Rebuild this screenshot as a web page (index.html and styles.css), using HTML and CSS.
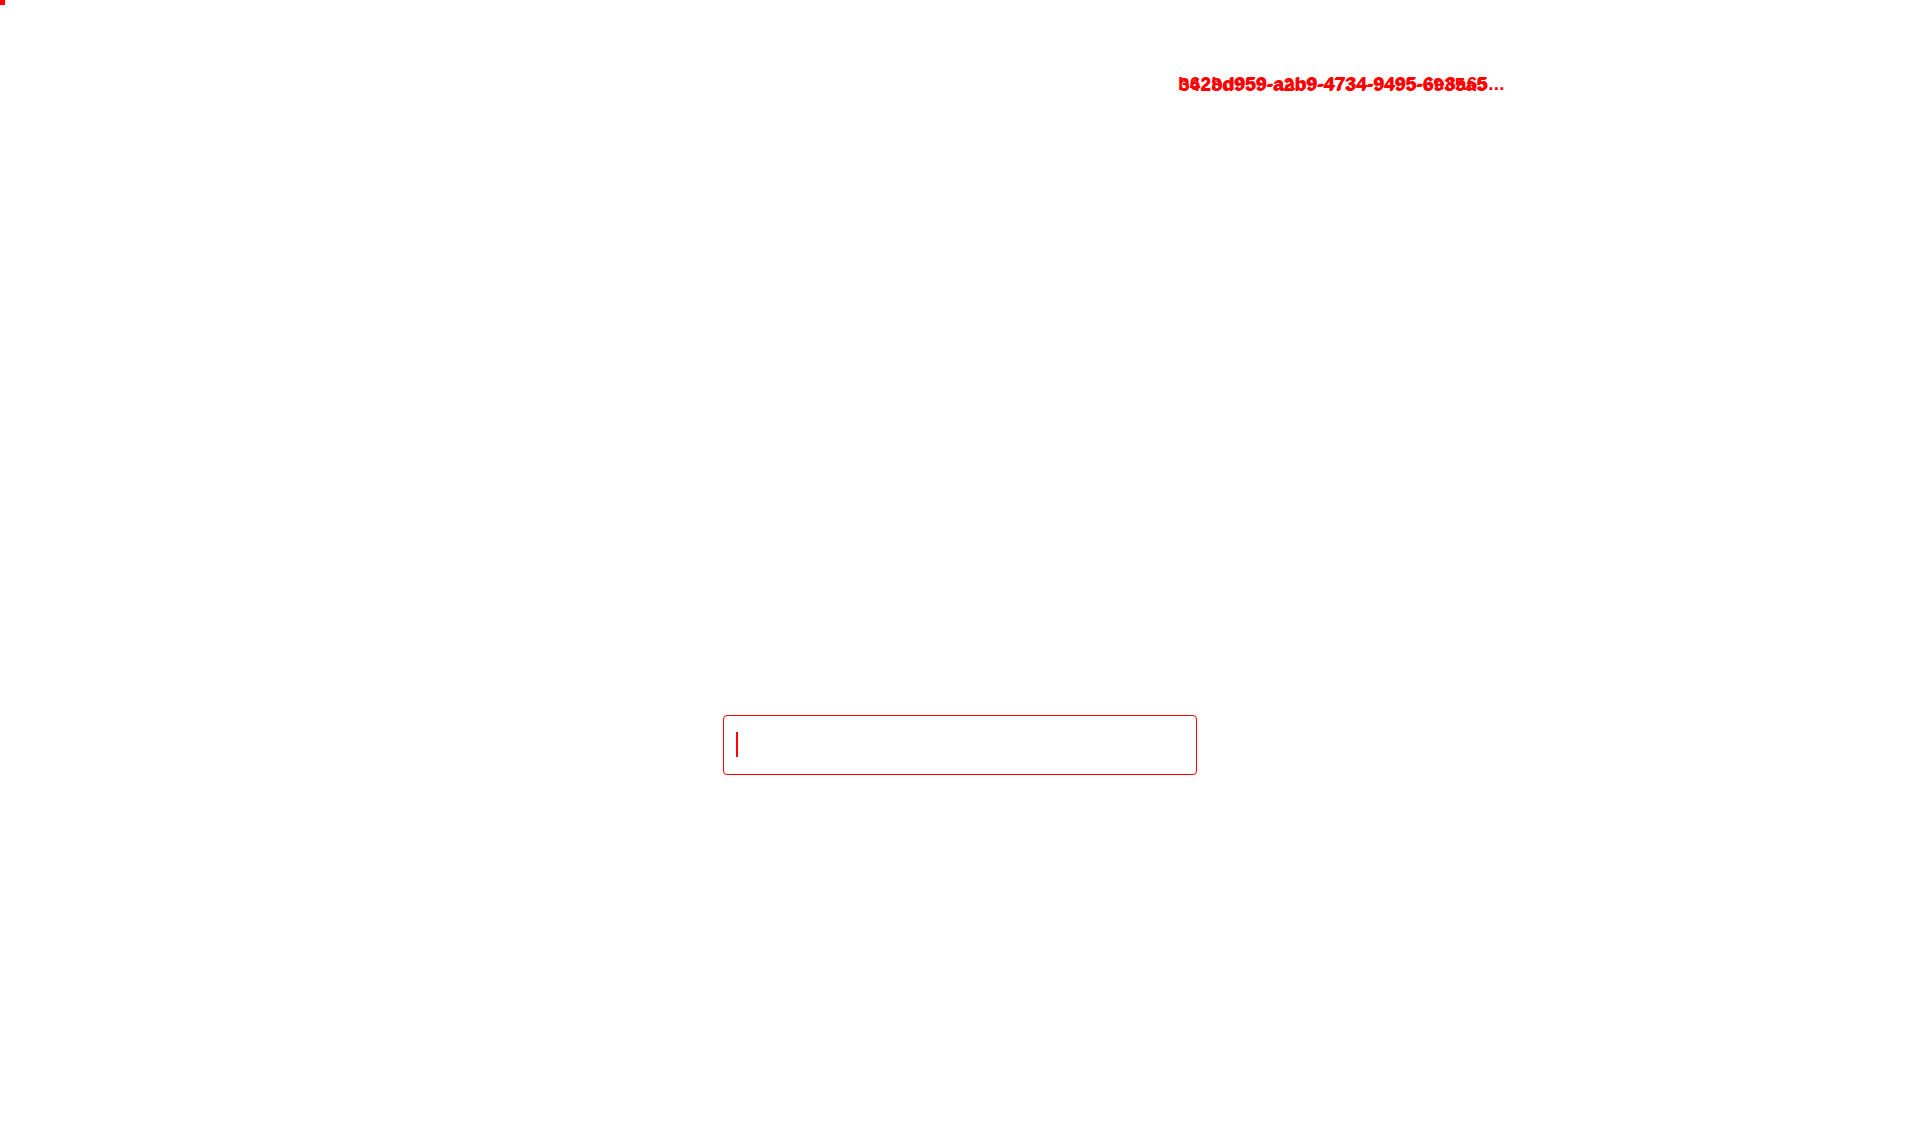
FILE: index.html
```html
<!DOCTYPE html>
<html lang="en">
<head>
<meta charset="utf-8">
<title>Session</title>
<link rel="stylesheet" href="styles.css">
</head>
<body>
<div class="page">
  <div class="marker"></div>
  <div class="title-row">
    <div class="title-stack">
      <span class="title">b62bd959-aab9-4734-9495-6e8a65...</span>
      <span class="title title-alt">3428d959-a2b9-4734-9495-6935a5</span>
    </div>
  </div>
  <div class="input-row">
    <div class="input-box"><span class="caret"></span></div>
  </div>
</div>
</body>
</html>
```

FILE: styles.css
```css
html, body {
  margin: 0;
  padding: 0;
  background: #ffffff;
}
body {
  font-family: "Liberation Sans", Arial, sans-serif;
  color: #ff0000;
  width: 1920px;
  height: 1128px;
  overflow: hidden;
}
.page {
  display: flex;
  flex-direction: column;
}
.marker {
  width: 5px;
  height: 5px;
  background: #ff0000;
}
.title-row {
  margin-top: 68px;
  padding-left: 1178px;
  display: flex;
}
.title-stack {
  display: grid;
}
.title {
  grid-area: 1 / 1;
  font-size: 19px;
  font-weight: bold;
  line-height: 22px;
  letter-spacing: 0.2px;
  color: #ff0000;
  white-space: nowrap;
}
.title-alt {
  padding-top: 1px;
  padding-left: 1px;
}
.input-row {
  margin-top: 619px;
  display: flex;
  justify-content: center;
}
.input-box {
  box-sizing: border-box;
  width: 474px;
  height: 60px;
  border: 1px solid #ff0000;
  border-radius: 4px;
  padding: 16px 12px;
  display: flex;
  align-items: flex-start;
}
.caret {
  width: 2px;
  height: 25px;
  background: #ff0000;
}
```
